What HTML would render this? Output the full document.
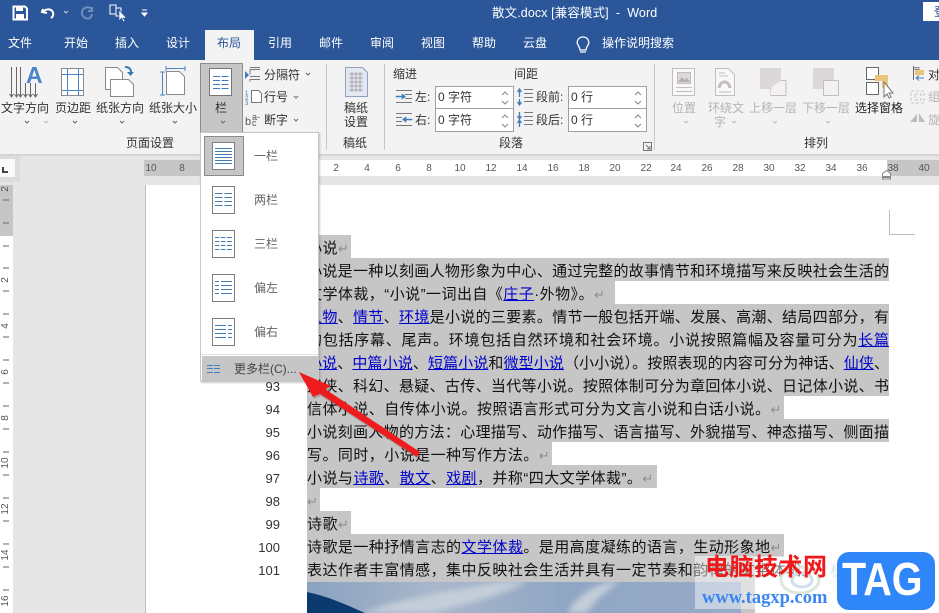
<!DOCTYPE html>
<html lang="zh"><head><meta charset="utf-8"><title>散文.docx</title>
<style>
html,body{margin:0;padding:0}
body{width:939px;height:613px;overflow:hidden;position:relative;background:#e6e6e6;font-family:"Liberation Sans","WenQuanYi Zen Hei","Noto Sans CJK SC",sans-serif;font-size:12px;color:#333}
div,span.t,svg{position:absolute}
.t{position:absolute;white-space:nowrap;line-height:14px}
.w{color:#fff}
.g{color:#b4b4b4}
.m{color:#666}
.r{font-size:10px;color:#555;line-height:12px;transform:translateX(-50%)}
.v{font-size:10px;color:#555;line-height:12px;transform:translate(-50%,-50%) rotate(-90deg)}
.n{font-size:13px;color:#333;width:40px;left:240px;text-align:right;line-height:23px;height:23px;transform:translateY(2px)}
.s{left:307px;height:23px;background:#c6c6c6}
.l{left:307px;height:23px;line-height:23px;white-space:nowrap;font-size:15px;letter-spacing:.45px;color:#111;transform:translateY(2px)}
.j{width:582px;white-space:normal;text-align:justify;text-align-last:justify;letter-spacing:0}
.l a{color:#00c;text-decoration:underline}
.l b{font-weight:normal;color:#8d8d8d;font-family:"DejaVu Sans",sans-serif;font-size:13px}
</style></head><body>
<div style="left:0;top:0;width:939px;height:60px;background:#2b579a"></div>
<div style="left:0;top:60px;width:939px;height:94px;background:#f3f3f3"></div>
<div style="left:0;top:154px;width:939px;height:2px;background:#d4d4d4"></div>
<div style="left:205px;top:30px;width:49px;height:30px;background:#f3f3f3"></div>

<span class="t w" style="left:492px;top:6px;font-size:12.5px;letter-spacing:.1px">散文.docx [兼容模式]&nbsp; -&nbsp; Word</span>
<div style="left:923px;top:2px;width:16px;height:19px;background:#fff"></div>
<span class="t" style="left:934px;top:5px;color:#2b579a">登</span>
<span class="t w" style="left:8px;top:36px">文件</span>
<span class="t w" style="left:64px;top:36px">开始</span>
<span class="t w" style="left:115px;top:36px">插入</span>
<span class="t w" style="left:166px;top:36px">设计</span>
<span class="t" style="left:217px;top:36px;color:#2b579a">布局</span>
<span class="t w" style="left:268px;top:36px">引用</span>
<span class="t w" style="left:319px;top:36px">邮件</span>
<span class="t w" style="left:370px;top:36px">审阅</span>
<span class="t w" style="left:421px;top:36px">视图</span>
<span class="t w" style="left:472px;top:36px">帮助</span>
<span class="t w" style="left:523px;top:36px">云盘</span>
<span class="t w" style="left:602px;top:36px">操作说明搜索</span>

<span class="t" style="left:1px;top:101px">文字方向</span>
<span class="t" style="left:55px;top:101px">页边距</span>
<span class="t" style="left:96px;top:101px">纸张方向</span>
<span class="t" style="left:149px;top:101px">纸张大小</span>
<span class="t" style="left:126px;top:136px">页面设置</span>
<div style="left:200px;top:63px;width:41px;height:68px;background:#c6c6c6;border:1px solid #8c8c8c"></div>
<span class="t" style="left:215px;top:101px">栏</span>
<span class="t" style="left:264px;top:68px">分隔符</span>
<span class="t" style="left:264px;top:90px">行号</span>
<span class="t" style="left:264px;top:113px">断字</span>
<span class="t" style="left:344px;top:101px">稿纸</span>
<span class="t" style="left:344px;top:115px">设置</span>
<span class="t" style="left:343px;top:136px">稿纸</span>
<span class="t" style="left:393px;top:67px">缩进</span>
<span class="t" style="left:514px;top:67px">间距</span>
<span class="t" style="left:415px;top:90px">左:</span>
<span class="t" style="left:415px;top:113px">右:</span>
<span class="t" style="left:536px;top:90px">段前:</span>
<span class="t" style="left:536px;top:113px">段后:</span>
<div style="left:435px;top:86px;width:77px;height:21px;background:#fff;border:1px solid #a0a0a0"></div>
<div style="left:435px;top:108px;width:77px;height:22px;background:#fff;border:1px solid #a0a0a0"></div>
<div style="left:568px;top:86px;width:77px;height:21px;background:#fff;border:1px solid #a0a0a0"></div>
<div style="left:568px;top:108px;width:77px;height:22px;background:#fff;border:1px solid #a0a0a0"></div>
<span class="t" style="left:438px;top:90px">0 字符</span>
<span class="t" style="left:438px;top:113px">0 字符</span>
<span class="t" style="left:571px;top:90px">0 行</span>
<span class="t" style="left:571px;top:113px">0 行</span>
<span class="t" style="left:499px;top:136px">段落</span>
<span class="t g" style="left:672px;top:101px">位置</span>
<span class="t g" style="left:708px;top:101px">环绕文</span>
<span class="t g" style="left:714px;top:115px">字</span>
<span class="t g" style="left:749px;top:101px">上移一层</span>
<span class="t g" style="left:802px;top:101px">下移一层</span>
<span class="t" style="left:855px;top:101px;color:#222">选择窗格</span>
<span class="t" style="left:804px;top:136px">排列</span>
<span class="t" style="left:928px;top:68px">对</span>
<span class="t g" style="left:928px;top:90px">组</span>
<span class="t g" style="left:928px;top:113px">旋</span>

<!-- top ruler -->
<div style="left:144px;top:160px;width:743px;height:16px;background:#fff"></div>
<div style="left:144px;top:160px;width:56px;height:16px;background:#c6c6c6"></div>
<div style="left:887px;top:160px;width:52px;height:16px;background:#c6c6c6"></div>
<span class="t r" style="left:151px;top:163px">10</span><span class="t r" style="left:182px;top:163px">8</span>
<span class="t r" style="left:336px;top:163px">2</span><span class="t r" style="left:367px;top:163px">4</span><span class="t r" style="left:398px;top:163px">6</span><span class="t r" style="left:429px;top:163px">8</span><span class="t r" style="left:460px;top:163px">10</span><span class="t r" style="left:491px;top:163px">12</span><span class="t r" style="left:522px;top:163px">14</span><span class="t r" style="left:553px;top:163px">16</span><span class="t r" style="left:584px;top:163px">18</span><span class="t r" style="left:615px;top:163px">20</span><span class="t r" style="left:646px;top:163px">22</span><span class="t r" style="left:676px;top:163px">24</span><span class="t r" style="left:707px;top:163px">26</span><span class="t r" style="left:738px;top:163px">28</span><span class="t r" style="left:769px;top:163px">30</span><span class="t r" style="left:800px;top:163px">32</span><span class="t r" style="left:831px;top:163px">34</span><span class="t r" style="left:862px;top:163px">36</span><span class="t r" style="left:893px;top:163px">38</span><span class="t r" style="left:924px;top:163px">40</span>

<!-- corner + left ruler -->
<div style="left:0;top:156px;width:20px;height:26px;background:#dcdcdc"></div>
<div style="left:0;top:159px;width:15px;height:18px;background:#fafafa"></div>
<div style="left:2px;top:167px;width:2px;height:6px;background:#444"></div>
<div style="left:2px;top:171px;width:6px;height:2px;background:#444"></div>
<div style="left:0;top:185px;width:13px;height:428px;background:#fff"></div>
<div style="left:0;top:185px;width:13px;height:51px;background:#c6c6c6"></div>
<span class="t v" style="left:6px;top:189px">2</span><span class="t v" style="left:6px;top:280px">2</span><span class="t v" style="left:6px;top:326px">4</span><span class="t v" style="left:6px;top:372px">6</span><span class="t v" style="left:6px;top:418px">8</span><span class="t v" style="left:6px;top:463px">10</span><span class="t v" style="left:6px;top:509px">12</span><span class="t v" style="left:6px;top:555px">14</span><span class="t v" style="left:6px;top:601px">16</span>

<!-- page -->
<div style="left:145px;top:185px;width:794px;height:428px;background:#fff;border-left:1px solid #bdbdbd"></div>

<svg style="left:0;top:0;z-index:1" width="939" height="613" viewBox="0 0 939 613" fill="none">
<!-- QAT -->
<path d="M13.500 6.500H25L27 8.500V19.500H13.500Z" stroke="#fff" stroke-width="2"/>
<path d="M16 6.500h7v4.500h-7zM16 14h8v5h-8z" fill="#fff"/>
<path d="M43 9l-1 3 5 1M43 12c2-3 6-3 8-2 3 2 3 6 0 8" stroke="#fff" stroke-width="2"/>
<path d="M64 11l2 2 2-2" stroke="#c6d2e4"/>
<path d="M92 7v4h-4M92 9c-3-3-9-2-10 3-1 4 4 8 8 6 1-1 2-2 2-4" stroke="#6f8fbd" stroke-width="2"/>
<path d="M110 5h6v9h-6zM116 8h5v8h-5z" stroke="#fff" fill="#2b579a"/>
<path d="M119 10v11l2.500-3 2 4 1.500-1-2-3h3.500z" fill="#fff" stroke="#2b579a" stroke-width=".6"/>
<path d="M142 10h5M142 13l2.500 3 2.500-3z" fill="#fff" stroke="#fff"/>
<!-- bulb -->
<path d="M583 37c-5 0-7 5-5 8 1 2 2 3 2 5h6c0-2 1-3 2-5 2-3 0-8-5-8zM580 52h6" stroke="#fff" stroke-width="1.300"/>

<!-- 文字方向 -->
<g stroke="#666"><path d="M11.500 67v30M16.500 67v30M20.500 67v30M25.500 83v14M30.500 83v14M35.500 83v14"/><path d="M9.500 94l2 3 2-3M14.500 94l2 3 2-3M18.500 94l2 3 2-3M23.500 94l2 3 2-3M28.500 94l2 3 2-3M33.500 94l2 3 2-3"/></g>
<text x="26" y="83" font-family="Liberation Sans" font-size="23" font-weight="bold" fill="#4a86c5">A</text>
<!-- 页边距 -->
<rect x="61.500" y="68.500" width="22" height="27" fill="#fff" stroke="#8a8a8a"/>
<path d="M62 74.500h21M62 90.500h21M67.500 69v26M78.500 69v26" stroke="#4a86c5"/>
<!-- 纸张方向 -->
<path d="M105.500 67.500h12l5 5v17h-17z" fill="#fff" stroke="#8a8a8a"/>
<path d="M110.500 79.500h18l5 5v12h-23z" fill="#fff" stroke="#8a8a8a"/>
<path d="M125 67c4 0 6 2 6 5" stroke="#3579b8" stroke-width="2"/><path d="M127 72h7l-3.500 4z" fill="#3579b8"/>
<!-- 纸张大小 -->
<path d="M166.500 71.500h13l5 5v18h-18z" fill="#fff" stroke="#8a8a8a"/>
<path d="M166 68.500h19M166 66v5M185 66v5M162.500 72v23M160 72h5M160 95h5" stroke="#4a86c5"/>
<!-- 栏 main -->
<rect x="209.500" y="68.500" width="22" height="27" fill="#fff" stroke="#777"/>
<path d="M213 76.500h7M221.500 76.500h7M213 80.500h7M221.500 80.500h7M213 84.500h7M221.500 84.500h7M213 88.500h7M221.500 88.500h7" stroke="#3f7cbc"/>
<!-- carets -->
<g stroke="#666"><path d="M25 121l2 2 2-2M73 121l2 2 2-2M120 121l2 2 2-2M173 121l2 2 2-2M221 121l2 2 2-2M306 73l2 2 2-2M294 96l2 2 2-2M294 119l2 2 2-2"/></g>
<g stroke="#bbb"><path d="M44 121l2 2 2-2M684 121l2 2 2-2M732 121l2 2 2-2M773 121l2 2 2-2M826 121l2 2 2-2"/></g>
<!-- 分隔符 -->
<path d="M250 67.500h10M250 74.500v-5h10M250 81.500v-2h10M250 76.500h10" stroke="#777"/><path d="M245 71l4 4-4 4z" fill="#3f7cbc"/>
<!-- 行号 -->
<path d="M251.500 90.500h7l3 3v9h-10z" fill="#fff" stroke="#777"/>
<text x="245" y="95" font-size="6" fill="#3f7cbc" font-family="Liberation Sans">1</text><text x="245" y="100" font-size="6" fill="#3f7cbc" font-family="Liberation Sans">2</text><text x="245" y="105" font-size="6" fill="#3f7cbc" font-family="Liberation Sans">3</text>
<!-- 断字 -->
<text x="245" y="125" font-size="11" fill="#555" font-family="Liberation Sans">b</text><text x="252" y="120" font-size="9" fill="#555" font-family="Liberation Sans">a-</text><text x="252" y="126" font-size="9" fill="#555" font-family="Liberation Sans">c</text>
<!-- separators -->
<path d="M326.500 64v86M384.500 64v86M654.500 64v86" stroke="#c6c6c6"/>
<!-- 稿纸 -->
<path d="M345.500 67.500h17l5 5v24h-22z" fill="#e4e8f2" stroke="#8fa0c0"/>
<path d="M349 74h14M349 78h14M349 82h14M349 86h14M349 90h14M352 72v20M356 72v20M360 72v20" stroke="#a6a6a6"/>
<!-- para icons -->
<path d="M396 90.500h16M405 94.500h7M405 98.500h7M396 102.500h16" stroke="#777"/><path d="M396 96h6v-2l3.500 2.500-3.500 2.500v-2h-6z" fill="#3f7cbc" stroke="#3f7cbc" stroke-width=".6"/>
<path d="M396 113.500h16M396 117.500h6M396 121.500h6M396 125.500h16" stroke="#777"/><path d="M412 119h-6v-2l-3.500 2.500 3.500 2.500v-2h6z" fill="#3f7cbc" stroke="#3f7cbc" stroke-width=".6"/>
<path d="M524 89.500h9M524 93.500h9M524 97.500h9M524 101.500h9" stroke="#777"/><path d="M519.500 90v7M519.500 99v6M517.500 92l2-3 2 3M517.500 102l2 3 2-3" stroke="#3f7cbc" stroke-width="1.300"/>
<path d="M524 112.500h9M524 116.500h9M524 120.500h9M524 124.500h9" stroke="#777"/><path d="M519.500 112v6M519.500 121v6M517.500 116l2 3 2-3M517.500 123l2-3 2 3" stroke="#3f7cbc" stroke-width="1.300"/>
<!-- spinners -->
<g stroke="#888"><path d="M502 95l3-3 3 3M502 101l3 3 3-3M502 118l3-3 3 3M502 124l3 3 3-3M635 95l3-3 3 3M635 101l3 3 3-3M635 118l3-3 3 3M635 124l3 3 3-3"/></g>
<path d="M643.500 142.500h8v8h-8zM646 145l4 4M650 146v3h-3" stroke="#777"/>
<!-- arrange -->
<rect x="672.500" y="68.500" width="22" height="27" fill="#f8f8f8" stroke="#c4bdc0"/><rect x="677.500" y="72.500" width="13" height="11" fill="#ddd8da" stroke="#c4bdc0"/><path d="M678 82l4-5 3 3 2-2 3 4z" fill="#b5aeb1"/><path d="M676 87.500h16M676 91.500h16" stroke="#c4bdc0"/>
<path d="M715.500 68.500h13l6 6v21h-19z" fill="#f8f8f8" stroke="#c4bdc0"/><path d="M719 73h6M719 76h9M719 92h12" stroke="#c4bdc0"/><path d="M719 88c1-8 10-8 11 0" stroke="#c4bdc0" stroke-width="3"/>
<rect x="760" y="68" width="21" height="21" fill="#dcd8da"/><path d="M771 87.500v8h15v-15h-5" fill="#f4f1f4" stroke="#c4bdc0"/><rect x="771" y="89" width="10" height="6" fill="#f4f1f4"/>
<rect x="813" y="68" width="21" height="21" fill="#dcd8da"/><rect x="823.500" y="80.500" width="15" height="15" fill="#f4f1f4" stroke="#c4bdc0"/>
<rect x="866.500" y="67.500" width="12" height="12" fill="#fff" stroke="#666"/><rect x="866.500" y="82.500" width="12" height="12" fill="#fff" stroke="#666"/>
<path d="M875 75h13v13h-6v-7h-7z" fill="#eac47c"/>
<path d="M884 82v15l3-3 2 4 2-1-2-4h4z" fill="#fff" stroke="#777"/>
<path d="M913.500 66v14" stroke="#666"/><path d="M915 70h9v5h-9z" fill="#eac47c"/><path d="M915 67.500h4v2h-4z" stroke="#888"/><path d="M924 78h-7M919 75.500l-3 2.500 3 2.500" stroke="#3f7cbc"/>
<path d="M911 91h13v12h-13zM915 94h6v6h-6z" stroke="#c4c4c4" stroke-dasharray="3 2"/>
<path d="M910 122l7-8v8zM919 113l6 9h-6z" fill="#bdbdbd"/>

<!-- ruler indent marker -->
<path d="M882.500 176.500v-3l4-3 4 3v3z M882.500 177.500h8v1.500h-8z" fill="#fff" stroke="#888"/>
<!-- left ruler ticks -->
<path d="M3 200h6M3 223h6M3 246h6M3 268h6M3 291h6M3 314h6M3 337h6M3 360h6M3 383h6M3 406h6M3 429h6M3 452h6M3 475h6M3 498h6M3 521h6M3 544h6M3 567h6M3 590h6" stroke="#666"/>
<!-- margin corner -->
<path d="M889.500 210v24.500H915" stroke="#bdbdbd"/>
</svg>

<!-- selections -->
<div class="s" style="top:235px;width:44px"></div>
<div class="s" style="top:258px;width:582px"></div>
<div class="s" style="top:281px;width:308px"></div>
<div class="s" style="top:304px;width:582px;height:92px"></div>
<div class="s" style="top:396px;width:477px"></div>
<div class="s" style="top:419px;width:582px"></div>
<div class="s" style="top:442px;width:245px"></div>
<div class="s" style="top:465px;width:350px"></div>
<div class="s" style="top:488px;width:13px"></div>
<div class="s" style="top:511px;width:44px"></div>
<div class="s" style="top:534px;width:477px"></div>
<div class="s" style="top:557px;width:448px;height:56px"></div>

<!-- image -->
<svg style="left:307px;top:582px" width="434" height="31" viewBox="0 0 434 31">
<defs><linearGradient id="sky" x1="0" x2="1" y1="0" y2="0"><stop offset="0" stop-color="#8ba2c0"/><stop offset=".3" stop-color="#a8b7cb"/><stop offset=".6" stop-color="#8fa6c4"/><stop offset="1" stop-color="#98abc8"/></linearGradient>
<filter id="bl"><feGaussianBlur stdDeviation="3"/></filter></defs>
<rect width="434" height="31" fill="url(#sky)"/>
<path d="M55 31C100 15 150 8 190 0l30 0C190 15 150 25 120 31zM260 31C270 15 280 8 300 0h12C295 12 285 22 280 31z" fill="#c4ced9" filter="url(#bl)"/>
<path d="M0 10C20 14 40 23 58 31H0z" fill="#0b3a6e"/>
</svg>

<!-- body text -->
<div class="l" style="top:235px">小说<b>↵</b></div>
<div class="l j" style="top:258px">小说是一种以刻画人物形象为中心、通过完整的故事情节和环境描写来反映社会生活的</div>
<div class="l" style="top:281px">文学体裁，“小说”一词出自《<a>庄子</a>·外物》。<b>↵</b></div>
<div class="l j" style="top:304px"><a>人物</a>、<a>情节</a>、<a>环境</a>是小说的三要素。情节一般包括开端、发展、高潮、结局四部分，有</div>
<div class="l j" style="top:327px">的包括序幕、尾声。环境包括自然环境和社会环境。小说按照篇幅及容量可分为<a>长篇</a></div>
<div class="l j" style="top:350px"><a>小说</a>、<a>中篇小说</a>、<a>短篇小说</a>和<a>微型小说</a>（小小说）。按照表现的内容可分为神话、<a>仙侠</a>、</div>
<div class="l j" style="top:373px">武侠、科幻、悬疑、古传、当代等小说。按照体制可分为章回体小说、日记体小说、书</div>
<div class="l" style="top:396px">信体小说、自传体小说。按照语言形式可分为文言小说和白话小说。<b>↵</b></div>
<div class="l j" style="top:419px">小说刻画人物的方法：心理描写、动作描写、语言描写、外貌描写、神态描写、侧面描</div>
<div class="l" style="top:442px">写。同时，小说是一种写作方法。<b>↵</b></div>
<div class="l" style="top:465px">小说与<a>诗歌</a>、<a>散文</a>、<a>戏剧</a>，并称“四大文学体裁”。<b>↵</b></div>
<div class="l" style="top:488px"><b>↵</b></div>
<div class="l" style="top:511px">诗歌<b>↵</b></div>
<div class="l" style="top:534px">诗歌是一种抒情言志的<a>文学体裁</a>。是用高度凝练的语言，生动形象地<b>↵</b></div>
<div class="l" style="top:557px">表达作者丰富情感，集中反映社会生活并具有一定节奏和韵律的文学体裁。</div>

<div class="n" style="top:373px">93</div><div class="n" style="top:396px">94</div><div class="n" style="top:419px">95</div><div class="n" style="top:442px">96</div><div class="n" style="top:465px">97</div><div class="n" style="top:488px">98</div><div class="n" style="top:511px">99</div><div class="n" style="top:534px">100</div><div class="n" style="top:557px">101</div>

<!-- dropdown -->
<div style="left:200px;top:132px;width:117px;height:248px;background:#fff;border:1px solid #c6c6c6;box-shadow:1px 1px 2px rgba(0,0,0,.2);z-index:2"></div>
<svg style="left:0;top:0;z-index:3" width="939" height="613" viewBox="0 0 939 613" fill="none">
<rect x="204.500" y="136.500" width="39" height="39" fill="#c6c6c6" stroke="#8c8c8c"/>
<g fill="#fff" stroke="#7f7f7f"><rect x="212.500" y="142.500" width="22" height="27"/><rect x="212.500" y="186.500" width="22" height="27"/><rect x="212.500" y="230.500" width="22" height="27"/><rect x="212.500" y="274.500" width="22" height="27"/><rect x="212.500" y="318.500" width="22" height="27"/></g>
<g stroke="#3f7cbc">
<path d="M215 148.500h17M215 151.500h17M215 154.500h17M215 157.500h17M215 160.500h17M215 163.500h17"/>
<path d="M215 193.500h7.500M224.500 193.500h7.500M215 197.500h7.500M224.500 197.500h7.500M215 201.500h7.500M224.500 201.500h7.500M215 205.500h7.500M224.500 205.500h7.500"/>
<path d="M215 237.500h4.500M221 237.500h4.500M227 237.500h5M215 241.500h4.500M221 241.500h4.500M227 241.500h5M215 245.500h4.500M221 245.500h4.500M227 245.500h5M215 249.500h4.500M221 249.500h4.500M227 249.500h5"/>
<path d="M215 281.500h4M221 281.500h11M215 285.500h4M221 285.500h11M215 289.500h4M221 289.500h11M215 293.500h4M221 293.500h11"/>
<path d="M215 325.500h11M228 325.500h4M215 329.500h11M228 329.500h4M215 333.500h11M228 333.500h4M215 337.500h11M228 337.500h4"/>
</g>
<path d="M202 354.500h116" stroke="#e2e2e2"/>
<rect x="202" y="356" width="116" height="25" fill="#c6c6c6"/>
<path d="M207 365.500h6M214 365.500h6M207 368.500h6M214 368.500h6M207 372.500h6M214 372.500h6" stroke="#3d80c8"/>
</svg>
<span class="t m" style="left:254px;top:149px;z-index:4">一栏</span>
<span class="t m" style="left:254px;top:193px;z-index:4">两栏</span>
<span class="t m" style="left:254px;top:237px;z-index:4">三栏</span>
<span class="t m" style="left:254px;top:281px;z-index:4">偏左</span>
<span class="t m" style="left:254px;top:325px;z-index:4">偏右</span>
<span class="t" style="left:234px;top:362px;z-index:4;color:#444">更多栏(C)...</span>

<!-- arrow -->
<svg style="left:0;top:0;z-index:5" width="939" height="613" viewBox="0 0 939 613">
<path d="M299 372L331 386 325 389 420 452 417 457 320 394 313 397Z" fill="#000" fill-opacity=".18" transform="translate(1,2)"/>
<path d="M299 372L331 386 325 389 420 452 417 457 320 394 313 397Z" fill="#ee1c1c"/>
</svg>

<!-- watermark -->
<div style="left:695px;top:556px;width:135px;height:53px;background:rgba(255,255,255,.45);z-index:6"></div>
<svg style="left:775px;top:560px;z-index:6" width="60" height="40" viewBox="0 0 60 40" fill="none"><ellipse cx="25" cy="20" rx="19" ry="13" stroke="#dbe8da" stroke-width="3"/><ellipse cx="27" cy="20" rx="10" ry="7" stroke="#cfdfee" stroke-width="3"/></svg>
<span class="t" style="left:830px;top:563px;z-index:6;font-size:16px;line-height:18px;color:#dfe7ee">极光下载站</span>
<span class="t" style="left:705px;top:554px;z-index:7;font-size:24px;line-height:28px;font-weight:bold;color:#f01818;letter-spacing:.5px">电脑技术网</span>
<span class="t" style="left:702px;top:589px;z-index:7;font-family:'Liberation Serif',serif;font-size:18.500px;line-height:18px;font-weight:bold;color:#3b86f0">www.tagxp.com</span>
<div style="left:837px;top:552px;width:98px;height:58px;border-radius:12px;background:#2f86f8;z-index:8"></div>
<span class="t" style="left:842px;top:556px;z-index:9;font-size:46px;line-height:46px;font-weight:bold;color:#fff;transform:scaleX(.86);transform-origin:0 0">TAG</span>
</body></html>
